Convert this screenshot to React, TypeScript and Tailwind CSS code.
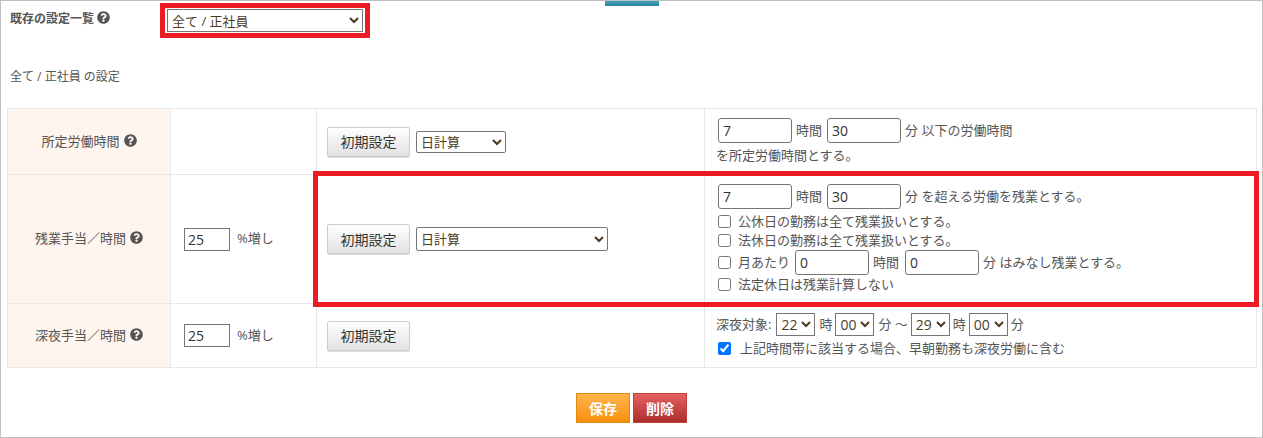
import { FaQuestionCircle } from 'react-icons/fa'

const inputClass = 'h-[25px] w-[74px] rounded-[3px] border border-[#767676] bg-white px-1 text-[14px] text-[#333]'
const rateInputClass = 'h-[23px] w-[46px] border border-[#767676] bg-white px-[3px] text-[14px] text-[#333]'
const timeSelectClass = 'h-[23px] w-[39px] border border-[#767676] bg-white text-[14px] text-[#4d3b22]'
const resetClass = 'h-[30px] w-[83px] rounded-[2px] border border-[#ccc] bg-gradient-to-b from-white to-[#e2e2e2] text-[14px] text-[#333] shadow-[0_1px_0_#ddd]'

function Help() {
  return <FaQuestionCircle className="ml-[4px] inline-block align-[-1px] text-[13px] text-[#555]" />
}

function LabelCell({ children }: { children: React.ReactNode }) {
  return <th className="w-[163px] border border-[#e8e8e8] bg-[#fff5ef] text-center text-[13px] font-normal text-[#555]">{children}</th>
}

function RateCell() {
  return (
    <td className="w-[146px] border border-[#e8e8e8] pl-[13px]">
      <span className="flex items-center gap-[7px]">
        <input className={rateInputClass} defaultValue="25" />
        <span>%増し</span>
      </span>
    </td>
  )
}

function Check({ label }: { label: string }) {
  return (
    <label className="flex items-center gap-[7px]">
      <input type="checkbox" className="m-0 h-[13px] w-[13px]" />
      <span>{label}</span>
    </label>
  )
}

function TimeSelect({ value }: { value: string }) {
  return (
    <select defaultValue={value} className={timeSelectClass}>
      <option>{value}</option>
    </select>
  )
}

export default function App() {
  return (
    <div className="relative h-[438px] w-[1263px] overflow-hidden border border-[#c0c0c0] bg-white font-['Open_Sans','Noto_Sans_CJK_JP',sans-serif] text-[13px] text-[#555]">
      <div className="absolute left-[604px] top-0 h-[5px] w-[54px] bg-gradient-to-b from-[#42a3be] to-[#2f8098]" />

      <div className="flex h-[37px] items-start pl-[9px] pt-[2px]">
        <div className="w-[150px] pt-[6px] text-[12px] font-bold leading-[20px]">
          既存の設定一覧
          <FaQuestionCircle className="ml-[3px] inline-block align-[-1px] text-[13px] text-[#555]" />
        </div>
        <div className="border-[5px] border-[#ed1c24] px-[2px] py-[1px]">
          <select defaultValue="全て / 正社員" className="block h-[23px] w-[196px] border border-[#767676] bg-white text-[13px] text-[#4d3b22]">
            <option>全て / 正社員</option>
          </select>
        </div>
      </div>

      <p className="ml-[9px] mt-[29px] text-[12px] leading-[20px]">全て / 正社員 の設定</p>

      <table className="ml-[6px] mt-[21px] w-[1250px] table-fixed border-collapse">
        <colgroup>
          <col className="w-[163px]" />
          <col className="w-[146px]" />
          <col className="w-[388px]" />
          <col />
        </colgroup>
        <tbody>
          <tr className="h-[66px]">
            <LabelCell>
              所定労働時間
              <Help />
            </LabelCell>
            <td className="border border-[#e8e8e8]" />
            <td className="border border-[#e8e8e8] pl-[10px]">
              <div className="flex items-center gap-[6px]">
                <button className={resetClass}>初期設定</button>
                <select defaultValue="日計算" className="h-[22px] w-[90px] rounded-[2px] border border-[#767676] bg-white text-[13px] text-[#4d3b22]">
                  <option>日計算</option>
                </select>
              </div>
            </td>
            <td className="border border-[#e8e8e8] pl-[11px]">
              <div className="flex items-center gap-[4px] pl-[2px]">
                <input className={inputClass} defaultValue="7" />
                <span>時間</span>
                <input className={`${inputClass} ml-px`} defaultValue="30" />
                <span>分 以下の労働時間</span>
              </div>
              <p className="mt-[2px] leading-[20px]">を所定労働時間とする。</p>
            </td>
          </tr>
          <tr className="h-[129px]">
            <LabelCell>
              残業手当／時間
              <Help />
            </LabelCell>
            <RateCell />
            <td className="border border-[#e8e8e8] pl-[10px]">
              <div className="flex items-center gap-[6px]">
                <button className={resetClass}>初期設定</button>
                <select defaultValue="日計算" className="h-[24px] w-[192px] rounded-[2px] border border-[#767676] bg-white text-[13px] text-[#4d3b22]">
                  <option>日計算</option>
                </select>
              </div>
            </td>
            <td className="border border-[#e8e8e8] pl-[13px]">
              <div className="flex items-center gap-[4px]">
                <input className={inputClass} defaultValue="7" />
                <span>時間</span>
                <input className={`${inputClass} ml-px`} defaultValue="30" />
                <span>分 を超える労働を残業とする。</span>
              </div>
              <div className="mt-[3px] leading-[19px]">
                <Check label="公休日の勤務は全て残業扱いとする。" />
              </div>
              <div className="leading-[19px]">
                <Check label="法休日の勤務は全て残業扱いとする。" />
              </div>
              <div className="flex items-center gap-[4px]">
                <Check label="月あたり" />
                <input className={`${inputClass} ml-px`} defaultValue="0" />
                <span>時間</span>
                <input className={`${inputClass} ml-[2px]`} defaultValue="0" />
                <span>分 はみなし残業とする。</span>
              </div>
              <div className="leading-[19px]">
                <Check label="法定休日は残業計算しない" />
              </div>
            </td>
          </tr>
          <tr className="h-[64px]">
            <LabelCell>
              深夜手当／時間
              <Help />
            </LabelCell>
            <RateCell />
            <td className="border border-[#e8e8e8] pl-[10px]">
              <button className={resetClass}>初期設定</button>
            </td>
            <td className="border border-[#e8e8e8] pl-[11px]">
              <div className="flex items-center gap-[3px]">
                <span className="mr-[2px]">深夜対象:</span>
                <TimeSelect value="22" />
                <span className="ml-px">時</span>
                <TimeSelect value="00" />
                <span className="ml-px">分 ～</span>
                <TimeSelect value="29" />
                <span>時</span>
                <TimeSelect value="00" />
                <span>分</span>
              </div>
              <label className="mt-[3px] flex items-center gap-[9px] pl-[2px]">
                <input type="checkbox" defaultChecked className="m-0 h-[13px] w-[13px]" />
                <span>上記時間帯に該当する場合、早朝勤務も深夜労働に含む</span>
              </label>
            </td>
          </tr>
        </tbody>
      </table>

      <div className="mt-[25px] flex justify-center gap-[3px]">
        <button className="h-[30px] w-[54px] border border-[#e08a10] bg-gradient-to-b from-[#ffb54a] to-[#f78f00] text-[14px] font-bold text-white">保存</button>
        <button className="h-[30px] w-[54px] border border-[#c04040] bg-gradient-to-b from-[#e45f5f] to-[#ae2e2e] text-[14px] font-bold text-white">削除</button>
      </div>

      <div className="pointer-events-none absolute left-[312px] top-[170px] h-[136px] w-[946px] border-[5px] border-[#ed1c24]" />
    </div>
  )
}
